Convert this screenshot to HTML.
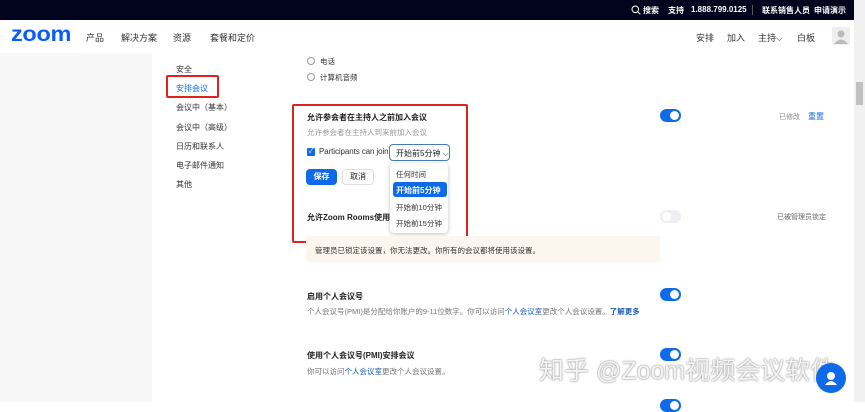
<!DOCTYPE html>
<html><head><meta charset="utf-8"><style>
*{margin:0;padding:0;box-sizing:border-box}
body{width:865px;height:402px;overflow:hidden;position:relative;background:#fff;font-family:"Liberation Sans","Noto Sans CJK SC",sans-serif;color:#222}
.a{position:absolute;white-space:nowrap}
.top{position:absolute;left:0;top:0;width:854px;height:20px;background:#02031c}
.top span{position:absolute;top:5px;font-size:8px;color:#fff;font-weight:bold}
.nav span{position:absolute;top:31px;font-size:9px;color:#333}
.side{position:absolute;left:0;top:53px;width:152px;height:349px;background:#f7f7f8}
.menu{position:absolute;left:176px;font-size:8px;color:#333}
.t{font-size:8px;font-weight:bold;color:#222}
.d{font-size:7.5px;color:#777}
.tg{position:absolute;width:21px;height:13px;border-radius:7px;background:#0e6ae8}
.tg:after{content:"";position:absolute;right:2px;top:2px;width:9px;height:9px;border-radius:50%;background:#fff}
.tg.off{background:#eeeff2}.tg.off:after{left:2px;right:auto}
.radio{position:absolute;width:8px;height:8px;border:1px solid #999;border-radius:50%}
</style></head><body>
<div class="top">
<svg class="a" style="left:631px;top:5px" width="10" height="10" viewBox="0 0 10 10"><circle cx="4.3" cy="4.3" r="3.3" fill="none" stroke="#fff" stroke-width="1"/><path d="M6.8 6.8L9.3 9.3" stroke="#fff" stroke-width="1"/></svg>
<span style="left:643px">搜索</span><span style="left:668px">支持</span><span style="left:691px">1.888.799.0125</span>
<div class="a" style="left:752px;top:5px;width:1px;height:10px;background:#555"></div>
<span style="left:762px">联系销售人员</span><span style="left:814px">申请演示</span>
</div>
<div class="a" style="left:854px;top:0;width:11px;height:402px;background:#f1f1f1"></div>
<div class="a" style="left:856px;top:82px;width:7px;height:23px;background:#c1c1c1"></div>
<div class="nav">
<div class="a" style="left:11px;top:23px;font-size:21px;font-weight:bold;color:#0b5cff;letter-spacing:-0.3px;transform:scaleX(1.12);transform-origin:left">zoom</div>
<span style="left:86px">产品</span><span style="left:121px">解决方案</span><span style="left:173px">资源</span><span style="left:210px">套餐和定价</span>
<span style="left:696px">安排</span><span style="left:727px">加入</span><span style="left:758px">主持⌵</span><span style="left:797px">白板</span>
</div>
<div class="a" style="left:832px;top:27px;width:18px;height:18px;background:#eee;border-radius:2px"><svg width="18" height="18"><circle cx="9" cy="7" r="3.5" fill="#bbb"/><path d="M2 17Q9 8 16 17Z" fill="#bbb"/></svg></div>
<div class="side"></div>
<div class="menu" style="top:64px">安全</div>
<div class="menu" style="top:83px;color:#0e6ae8">安排会议</div>
<div class="a" style="left:166px;top:75px;width:53px;height:23px;border:2px solid #e0221e;border-radius:2px"></div>
<div class="menu" style="top:102px">会议中（基本）</div>
<div class="menu" style="top:122px">会议中（高级）</div>
<div class="menu" style="top:141px">日历和联系人</div>
<div class="menu" style="top:160px">电子邮件通知</div>
<div class="menu" style="top:179px">其他</div>
<div class="radio" style="left:307px;top:57px"></div><div class="a d" style="left:320px;top:56px;color:#333">电话</div>
<div class="radio" style="left:307px;top:73px"></div><div class="a d" style="left:320px;top:72px;color:#333">计算机音频</div>
<div class="a t" style="left:307px;top:112px">允许参会者在主持人之前加入会议</div>
<div class="a d" style="left:307px;top:127px;color:#999">允许参会者在主持人到来前加入会议</div>
<div class="a" style="left:307px;top:148px;width:8px;height:8px;background:#0e6ae8;border-radius:1px;color:#fff;font-size:7px;line-height:8px;text-align:center">✓</div>
<div class="a" style="left:319px;top:147px;font-size:8px;color:#333;letter-spacing:-0.1px">Participants can join</div>
<div class="a" style="left:389px;top:144px;width:61px;height:17px;border:1.5px solid #4a78c2;border-radius:4px;font-size:8px;padding:3px 0 0 6px;color:#222;background:#fff">开始前5分钟 ⌵</div>
<div class="a" style="left:306px;top:169px;width:31px;height:16px;background:#0e6ae8;border-radius:4px;color:#fff;font-size:8px;font-weight:bold;text-align:center;line-height:16px">保存</div>
<div class="a" style="left:342px;top:169px;width:32px;height:16px;border:1px solid #ddd;border-radius:4px;font-size:8px;text-align:center;line-height:14px">取消</div>
<div class="a t" style="left:307px;top:212px">允许Zoom Rooms使用主</div>
<div class="a" style="left:390px;top:163px;width:58px;height:70px;background:#fff;border-radius:4px;box-shadow:0 1px 4px rgba(0,0,0,.25)"></div>
<div class="a d" style="left:396px;top:169px;color:#333">任何时间</div>
<div class="a" style="left:393px;top:182px;width:54px;height:15px;background:#0e6ae8;border-radius:3px;color:#fff;font-size:8px;font-weight:bold;padding:3px 0 0 3px">开始前5分钟</div>
<div class="a d" style="left:396px;top:202px;color:#333">开始前10分钟</div>
<div class="a d" style="left:396px;top:218px;color:#333">开始前15分钟</div>
<div class="a" style="left:292px;top:104px;width:176px;height:139px;border:2px solid #e0221e;border-radius:2px"></div>
<div class="a" style="left:306px;top:236px;width:354px;height:26px;background:#fdf6ef"></div>
<div class="a d" style="left:315px;top:245px;color:#333">管理员已锁定该设置，你无法更改。你所有的会议都将使用该设置。</div>
<div class="tg" style="left:660px;top:109px"></div>
<div class="a d" style="left:779px;top:112px;color:#888;font-size:7px">已修改</div>
<div class="a" style="left:808px;top:111px;font-size:8px;color:#0e6ae8">重置</div>
<div class="tg off" style="left:660px;top:210px"></div>
<div class="a d" style="left:777px;top:212px;color:#666;font-size:7px">已被管理员锁定</div>
<div class="a t" style="left:307px;top:291px">启用个人会议号</div>
<div class="a d" style="left:307px;top:306px">个人会议号(PMI)是分配给你账户的9-11位数字。你可以访问<span style="color:#1a5bb8">个人会议室</span>更改个人会议设置。<span style="color:#1a5bb8;font-weight:bold">了解更多</span></div>
<div class="tg" style="left:660px;top:288px"></div>
<div class="a t" style="left:307px;top:350px">使用个人会议号(PMI)安排会议</div>
<div class="a d" style="left:307px;top:366px">你可以访问<span style="color:#1a5bb8">个人会议室</span>更改个人会议设置。</div>
<div class="tg" style="left:660px;top:348px"></div>
<div class="tg" style="left:660px;top:399px"></div>
<div class="a" style="left:539px;top:351px;font-size:25px;color:rgba(255,255,255,.9);text-shadow:0 0 1px #888,0 0 2px #999">知乎 @Zoom视频会议软件</div>
<div class="a" style="left:816px;top:363px;width:30px;height:30px;border-radius:50%;background:#0e6ae8"><svg width="30" height="30"><circle cx="15" cy="13" r="4" fill="#fff"/><path d="M9 22Q15 14 21 22Z" fill="#fff"/></svg></div>
</body></html>
